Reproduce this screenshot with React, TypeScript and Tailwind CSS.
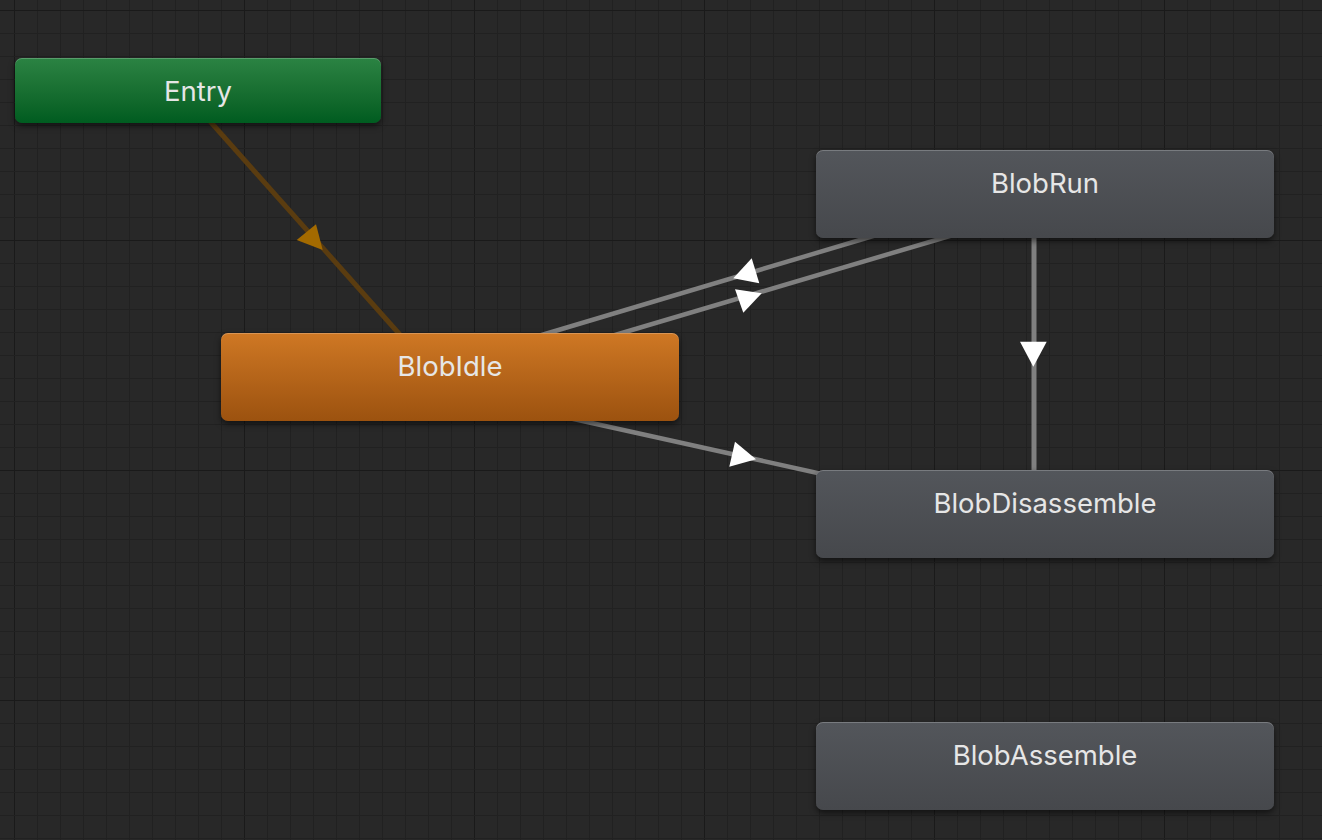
import React from 'react';

// Unity-style animator graph: grid canvas, transitions and state nodes

const MINOR = 23;
const W = 1322;
const H = 840;

function Grid() {
  const xs: number[] = [];
  for (let x = 14 - MINOR; x < W; x += MINOR) xs.push(x);
  const ys: number[] = [];
  for (let y = 10 - MINOR; y < H; y += MINOR) ys.push(y);
  return (
    <g>
      {xs.map((x, i) => (
        <rect key={'v' + i} x={x} y={0} width={1} height={H} fill={(i - 1) % 10 === 0 ? '#1a1a1a' : '#212121'} />
      ))}
      {ys.map((y, i) => (
        <rect key={'h' + i} x={0} y={y} width={W} height={1} fill={(i - 1) % 10 === 0 ? '#1a1a1a' : '#212121'} />
      ))}
    </g>
  );
}

function Transitions() {
  return (
    <g>
      {/* Entry -> BlobIdle */}
      <line x1={200} y1={110} x2={410} y2={346} stroke="#5a3c10" strokeWidth={5} />
      <polygon points="296.7,240 316,224.3 322.7,250" fill="#a36a00" />

      {/* BlobRun -> BlobIdle */}
      <line x1={530} y1={338.5} x2={900} y2={228} stroke="#808080" strokeWidth={4.5} />
      <polygon points="751.7,258.3 733.3,278.3 759.3,283.3" fill="#ffffff" />

      {/* BlobIdle -> BlobRun */}
      <line x1={605} y1={338} x2={970} y2={230} stroke="#808080" strokeWidth={4.5} />
      <polygon points="735,289.3 761.7,293.3 743.3,312.7" fill="#ffffff" />

      {/* BlobIdle -> BlobDisassemble */}
      <line x1={560} y1={416} x2={840} y2={478} stroke="#808080" strokeWidth={4.5} />
      <polygon points="735,441.7 756,459.3 729.3,466.7" fill="#ffffff" />

      {/* BlobRun -> BlobDisassemble */}
      <line x1={1034} y1={230} x2={1034} y2={480} stroke="#808080" strokeWidth={5} />
      <polygon points="1020,341.7 1046.7,341.7 1033.3,366.7" fill="#ffffff" />
    </g>
  );
}

function StateNode({ label, className }: { label: string; className: string }) {
  return (
    <div
      className={
        'absolute rounded-[7px] bg-linear-to-b pt-[20px] text-center text-[27.5px] leading-none text-[#e6e6e6] shadow-[inset_0_1px_0_rgba(255,255,255,0.22),0_3px_6px_rgba(0,0,0,0.55)] ' +
        className
      }
      style={{ fontFamily: 'Inter, "Noto Sans", sans-serif' }}
    >
      {label}
    </div>
  );
}

export default function App() {
  return (
    <div className="relative h-[840px] w-[1322px] overflow-hidden bg-[#282828]">
      <svg className="absolute inset-0" width={W} height={H} viewBox={`0 0 ${W} ${H}`}>
        <Grid />
        <Transitions />
      </svg>

      <StateNode label="Entry" className="left-[15px] top-[58px] h-[65px] w-[366px] from-[#2b8343] to-[#005c20]" />
      <StateNode label="BlobIdle" className="left-[221px] top-[333px] h-[88px] w-[458px] from-[#cf7824] to-[#9c520f]" />
      <StateNode label="BlobRun" className="left-[816px] top-[150px] h-[88px] w-[458px] from-[#53565b] to-[#46484c]" />
      <StateNode label="BlobDisassemble" className="left-[816px] top-[470px] h-[88px] w-[458px] from-[#53565b] to-[#46484c]" />
      <StateNode label="BlobAssemble" className="left-[816px] top-[722px] h-[88px] w-[458px] from-[#53565b] to-[#46484c]" />
    </div>
  );
}
